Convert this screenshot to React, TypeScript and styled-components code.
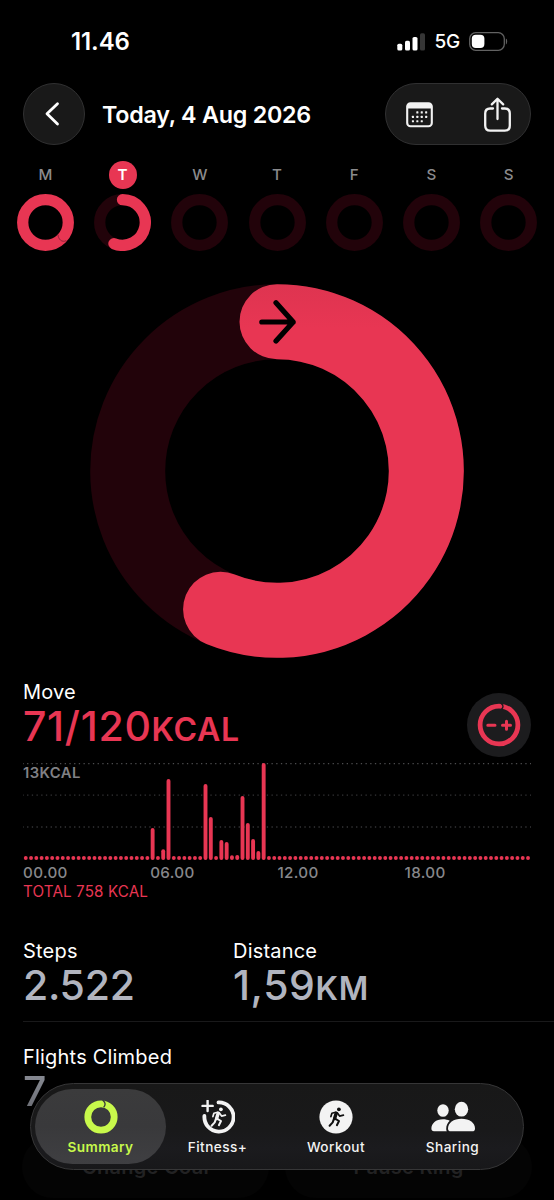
import React from "react";
import styled, { createGlobalStyle } from "styled-components";

const PINK = "#e83653";
const TRACK = "#22030a";
const LIME = "#c8f94b";

const GlobalStyle = createGlobalStyle`
  * { box-sizing: border-box; }
  html, body { margin: 0; background: #000; overflow: hidden; }
  svg { display: block; }
`;

const Screen = styled.main`
  position: relative;
  width: 554px;
  height: 1200px;
  overflow: hidden;
  display: flex;
  flex-direction: column;
  background: #000;
  color: #fff;
  font-family: Inter, "Liberation Sans", sans-serif;
`;

const StatusBar = styled.header`
  height: 83px;
  flex: none;
  display: flex;
  align-items: center;
  padding: 0 46px 0 71px;
`;

const Clock = styled.time`
  font-size: 24px;
  font-weight: 600;
  letter-spacing: -0.1px;
  margin-right: auto;
`;

const Network = styled.span`
  font-size: 19px;
  font-weight: 500;
  letter-spacing: -0.2px;
  margin: 0 9px 0 9px;
`;

const NavBar = styled.nav`
  height: 62px;
  flex: none;
  display: flex;
  align-items: center;
  padding: 0 23px;
`;

const GlassButton = styled.button`
  width: 62px;
  height: 62px;
  padding: 0 2px 0 0;
  border: 1px solid #303031;
  border-radius: 50%;
  background: #191919;
  color: #fff;
  display: flex;
  align-items: center;
  justify-content: center;
`;

const Title = styled.h1`
  margin: 0 auto 0 17px;
  font-size: 23.3px;
  font-weight: 600;
  letter-spacing: -0.25px;
  white-space: nowrap;
`;

const ActionGroup = styled.div`
  width: 146px;
  height: 62px;
  border: 1px solid #303031;
  border-radius: 31px;
  background: #191919;
  display: flex;
  align-items: center;
  justify-content: space-between;
  padding: 1px 18px 0 20px;
`;

const Week = styled.section`
  display: flex;
  padding: 15.5px 6.8px 0;
  flex: none;
`;

const Day = styled.div`
  flex: 1;
  display: flex;
  flex-direction: column;
  align-items: center;
  gap: 5.7px;
`;

const DayLabel = styled.span<{ $today: boolean }>`
  width: 28px;
  height: 28px;
  border-radius: 50%;
  line-height: 28px;
  text-align: center;
  font-size: 15.2px;
  font-weight: ${(p) => (p.$today ? 600 : 500)};
  color: ${(p) => (p.$today ? "#fff" : "#8b8b8d")};
  background: ${(p) => (p.$today ? PINK : "transparent")};
`;

const RingHero = styled.section`
  display: flex;
  justify-content: center;
  margin-top: 32.8px;
  flex: none;
`;

const MoveHeader = styled.section`
  display: flex;
  justify-content: space-between;
  padding: 22px 23px 0;
  height: 105px;
  flex: none;
`;

const Metric = styled.div`
  display: flex;
  flex-direction: column;
`;

const MetricLabel = styled.span`
  font-size: 20px;
  line-height: 24px;
  height: 24px;
  letter-spacing: 0.2px;
  white-space: nowrap;
`;

const MetricValue = styled.span<{ $color: string; $spacing?: number }>`
  font-size: 41px;
  line-height: 44px;
  height: 44px;
  font-weight: 500;
  letter-spacing: ${(p) => p.$spacing ?? 0}px;
  white-space: nowrap;
  color: ${(p) => p.$color};
`;

const Unit = styled.span`
  font-size: 32px;
  font-weight: 600;
`;

const EditGoal = styled.button`
  width: 64px;
  height: 64px;
  margin-top: 13px;
  border: 0;
  padding: 0;
  border-radius: 50%;
  background: #1c1c1e;
  display: flex;
  align-items: center;
  justify-content: center;
`;

const ChartBlock = styled.section`
  padding: 0 23px;
  flex: none;
`;

const Plot = styled.div`
  position: relative;
  height: 97px;
`;

const PeakLabel = styled.span`
  position: absolute;
  left: 0;
  top: 1px;
  font-size: 14.8px;
  line-height: 18px;
  font-weight: 600;
  letter-spacing: 0.45px;
  color: #818185;
`;

const Axis = styled.div`
  display: grid;
  grid-template-columns: repeat(4, 127.2px);
  font-size: 15.2px;
  line-height: 18px;
  font-weight: 500;
  letter-spacing: 0.35px;
  color: #87878b;
  padding-top: 4.2px;
`;

const Total = styled.div`
  font-size: 15.2px;
  line-height: 18px;
  padding-top: 0.9px;
  height: 18px;
  letter-spacing: 0.12px;
  color: ${PINK};
`;

const Stats = styled.section`
  display: grid;
  grid-template-columns: 210px 1fr;
  margin: 38.5px 0 0 23px;
  padding-bottom: 14.5px;
  border-bottom: 1px solid #19191a;
  flex: none;
`;

const Flights = styled.section`
  margin: 22.7px 0 0 23px;
  flex: none;
`;

const FadedValue = styled(MetricValue)`
  display: block;
  color: transparent;
  background: linear-gradient(#8b8e97, #696b72);
  background-clip: text;
  -webkit-background-clip: text;
`;

const GoalActions = styled.div`
  position: absolute;
  left: 22px;
  right: 22px;
  top: 1136px;
  display: grid;
  grid-template-columns: 1fr 1fr;
  gap: 16px;
`;

const GoalButton = styled.button`
  height: 62px;
  border: 0;
  padding: 0 0 1px;
  border-radius: 31px;
  background: #040404;
  color: #222223;
  font: 600 20px/24px Inter, sans-serif;
  letter-spacing: 0.25px;
`;

const TabBar = styled.nav`
  position: absolute;
  left: 30px;
  top: 1083px;
  width: 494px;
  height: 87px;
  border: 1px solid #363637;
  border-radius: 43.5px;
  background: linear-gradient(#181818 0%, #19191a 55%, #1b1b1e 75%, #18181a 100%);
  display: grid;
  grid-template-columns: 131px 103px 134px 99px;
  padding: 5px 4px;
`;

const Tab = styled.button<{ $active?: boolean }>`
  border: 0;
  padding: 11px 0 0;
  border-radius: 38px;
  background: ${(p) => (p.$active ? "linear-gradient(#3b3b3c, #39393b 50%, #3f3f42)" : "none")};
  color: ${(p) => (p.$active ? LIME : "#f3f3f3")};
  font: ${(p) => (p.$active ? 600 : 500)} 13.6px/18px Inter, sans-serif;
  letter-spacing: ${(p) => (p.$active ? 0.4 : 0.45)}px;
  display: flex;
  flex-direction: column;
  align-items: center;
  gap: 4px;
`;

const TabIcon = styled.span`
  position: relative;
  height: 34px;
  display: flex;
  align-items: center;
  justify-content: center;
`;

function arc(c: number, r: number, degrees: number) {
  const a = (degrees * Math.PI) / 180;
  const x = c + r * Math.sin(a);
  const y = c - r * Math.cos(a);
  return `M${c} ${c - r}A${r} ${r} 0 ${degrees > 180 ? 1 : 0} 1 ${x} ${y}`;
}

function DayRing({ state }: { state: string }) {
  return (
    <svg width="57" height="57" viewBox="0 0 57 57" fill="none">
      <circle cx="28.5" cy="28.5" r="22.8" stroke={state === "full" ? PINK : TRACK} strokeWidth="11.3" />
      {state === "partial" && (
        <path d={arc(28.5, 22.8, 202)} stroke={PINK} strokeWidth="11.3" strokeLinecap="round" />
      )}
      {state === "full" && <path d="M41 40.5C41 45 45 49 49.3 46.6" stroke="#95243a" strokeWidth="1" />}
    </svg>
  );
}

/* Sprinting figure drawn inside a 34px tab icon. */
function Runner({ color }: { color: string }) {
  return (
    <g fill="none" stroke={color} strokeLinecap="round" strokeLinejoin="round">
      <circle cx="19.9" cy="9.3" r="1.9" fill={color} stroke="none" />
      <path d="M17.2 13.2L15.6 18.6" strokeWidth="3.4" />
      <path d="M16.6 12.3L12.9 13.3L11.9 16.6" strokeWidth="1.7" />
      <path d="M18.4 13L20.6 16.1L24.4 15.2" strokeWidth="1.7" />
      <path d="M16.4 18.9L20 21L17.9 25.2" strokeWidth="2" />
      <path d="M14.8 19.2L13.7 22.4L10.6 25.7" strokeWidth="2" />
    </g>
  );
}

const days = [
  { name: "M", state: "full" },
  { name: "T", state: "partial", today: true },
  { name: "W", state: "empty" },
  { name: "T", state: "empty" },
  { name: "F", state: "empty" },
  { name: "S", state: "empty" },
  { name: "S", state: "empty" },
];

const activity: Record<number, number> = {
  24: 32, 26: 10.7, 27: 81, 34: 76, 35: 43, 37: 20, 38: 18, 39: 4.7,
  40: 5, 41: 64, 42: 37, 43: 21, 44: 9, 45: 97,
};

function MoveChart() {
  return (
    <svg width="508" height="97" viewBox="0 0 508 97">
      {[0.6, 32.2, 64].map((y, i) => (
        <line key={y} x1="-0.6" x2="508" y1={y} y2={y} stroke={i ? "#353537" : "#4c4c4e"} strokeWidth="1.3" strokeDasharray="1.3 3.4" />
      ))}
      {Array.from({ length: 96 }, (_, i) => {
        const h = activity[i] ?? 4;
        return <rect key={i} x={0.8 + i * 5.287} y={97 - h} width="3.9" height={h} rx="1.95" fill={PINK} />;
      })}
    </svg>
  );
}

export default function App() {
  return (
    <Screen>
      <GlobalStyle />
      <StatusBar>
        <Clock>11.46</Clock>
        <svg width="28" height="18" viewBox="0 0 28 18" fill="#fff">
          <rect x="0.3" y="10.7" width="5" height="6.8" rx="1.6" />
          <rect x="8" y="7.8" width="5" height="9.7" rx="1.6" />
          <rect x="15.5" y="4" width="5" height="13.5" rx="1.6" />
          <rect x="23" y="0.3" width="5" height="17.2" rx="1.6" fill="#363636" />
        </svg>
        <Network>5G</Network>
        <svg width="39" height="19" viewBox="0 0 39 19" fill="none">
          <rect x="0.7" y="0.7" width="34.6" height="17.6" rx="6" stroke="#626262" strokeWidth="1.3" />
          <rect x="2.8" y="2.8" width="12.6" height="13.2" rx="4" fill="#fff" />
          <path d="M36.9 6.5C38.6 7.2 38.6 11.6 36.9 12.4Z" fill="#626262" />
        </svg>
      </StatusBar>

      <NavBar>
        <GlassButton aria-label="Back">
          <svg width="16" height="26" viewBox="0 0 16 26" fill="none" stroke="#fff" strokeWidth="2.8" strokeLinecap="round" strokeLinejoin="round">
            <path d="M12.5 2.7L2 12.8L12.5 23" />
          </svg>
        </GlassButton>
        <Title>Today, 4 Aug 2026</Title>
        <ActionGroup>
          <svg width="27" height="26" viewBox="0 0 27 26" fill="none">
            <rect x="1.2" y="1.3" width="24.6" height="23" rx="3.3" stroke="#f2f2f2" strokeWidth="2.1" />
            <path d="M1.2 4.2Q1.2 1.3 4.4 1.3H22.6Q25.8 1.3 25.8 4.2V6.6H1.2Z" fill="#f2f2f2" />
            {[[11.2, 10.2], [15.6, 10.2], [20, 10.2], [6.8, 14.7], [11.2, 14.7], [15.6, 14.7], [20, 14.7], [6.8, 19.1], [11.2, 19.1], [15.6, 19.1]].map(([x, y]) => (
              <rect key={`${x}-${y}`} x={x - 0.9} y={y - 0.9} width="2.1" height="2.1" rx="0.5" fill="#f2f2f2" />
            ))}
          </svg>
          <svg width="29" height="36" viewBox="0 0 29 36" fill="none" stroke="#f2f2f2" strokeWidth="2.3" strokeLinecap="round" strokeLinejoin="round">
            <path d="M10 11.5H7.2Q2.2 11.5 2.2 16.5V28.5Q2.2 33.7 7.2 33.7H21.8Q26.8 33.7 26.8 28.5V16.5Q26.8 11.5 21.8 11.5H19" />
            <path d="M14.5 22V2M8.8 7.4L14.5 1.8L20.2 7.4" />
          </svg>
        </ActionGroup>
      </NavBar>

      <Week>
        {days.map((d, i) => (
          <Day key={i}>
            <DayLabel $today={!!d.today}>{d.name}</DayLabel>
            <DayRing state={d.state} />
          </Day>
        ))}
      </Week>

      <RingHero>
        <svg width="374" height="374" viewBox="0 0 374 374" fill="none">
          <defs>
            <linearGradient id="ringFill" gradientUnits="userSpaceOnUse" x1="0" y1="0" x2="0" y2="45">
              <stop offset="0" stopColor="#de3450" />
              <stop offset="1" stopColor={PINK} />
            </linearGradient>
          </defs>
          <circle cx="187" cy="187" r="149.3" stroke={TRACK} strokeWidth="75" />
          <path d={arc(187, 149.3, 202.2)} stroke="url(#ringFill)" strokeWidth="75" strokeLinecap="round" />
          <path d="M171.8 38H203.2M186 18.8L203.2 38L186 57" stroke="#000" strokeWidth="5.2" strokeLinecap="round" strokeLinejoin="round" />
        </svg>
      </RingHero>

      <MoveHeader>
        <Metric>
          <MetricLabel>Move</MetricLabel>
          <MetricValue $color={PINK} $spacing={0.7}>
            71/120<Unit>KCAL</Unit>
          </MetricValue>
        </Metric>
        <EditGoal aria-label="Adjust move goal">
          <svg width="44" height="44" viewBox="0 0 44 44" fill="none" stroke={PINK}>
            <circle cx="22" cy="22" r="18.9" strokeWidth="4.8" />
            <path d="M24.2 0.5Q27.6 3.3 24.5 6.2" stroke="#1c1c1e" strokeWidth="1.4" />
            <path d="M10.8 22.2H18M25.5 22.2H33.5M29.5 18.2V26.2" strokeWidth="3" strokeLinecap="round" />
          </svg>
        </EditGoal>
      </MoveHeader>

      <ChartBlock>
        <Plot>
          <MoveChart />
          <PeakLabel>13KCAL</PeakLabel>
        </Plot>
        <Axis>
          <span>00.00</span>
          <span>06.00</span>
          <span>12.00</span>
          <span>18.00</span>
        </Axis>
        <Total>TOTAL 758 KCAL</Total>
      </ChartBlock>

      <Stats>
        <Metric>
          <MetricLabel>Steps</MetricLabel>
          <MetricValue $color="#b1b4bf" $spacing={-0.3}>2.522</MetricValue>
        </Metric>
        <Metric>
          <MetricLabel>Distance</MetricLabel>
          <MetricValue $color="#b1b4bf" $spacing={0.6}>
            1,59<Unit>KM</Unit>
          </MetricValue>
        </Metric>
      </Stats>

      <Flights>
        <Metric>
          <MetricLabel>Flights Climbed</MetricLabel>
          <FadedValue $color="transparent">7</FadedValue>
        </Metric>
      </Flights>

      <GoalActions>
        <GoalButton>Change Goal</GoalButton>
        <GoalButton>Pause Ring</GoalButton>
      </GoalActions>

      <TabBar>
        <Tab $active>
          <TabIcon>
            <svg width="34" height="34" viewBox="0 0 34 34" fill="none">
              <circle cx="17" cy="17" r="13.2" stroke={LIME} strokeWidth="6.8" />
              <path d="M18.6 0Q23 3.6 19.6 7.4" stroke="#39393a" strokeWidth="1.3" />
            </svg>
          </TabIcon>
          Summary
        </Tab>
        <Tab>
          <TabIcon>
            <svg width="34" height="34" viewBox="0 0 34 34" fill="none" stroke="#f3f3f3" strokeLinecap="round">
              <path d="M17.5 2.4A14.6 14.6 0 1 1 3.4 16" strokeWidth="3.8" />
              <path d="M6.6 0.8V11M1.5 5.9H11.7" strokeWidth="2.4" />
              <Runner color="#f3f3f3" />
            </svg>
          </TabIcon>
          Fitness+
        </Tab>
        <Tab>
          <TabIcon>
            <svg width="34" height="34" viewBox="0 0 34 34">
              <circle cx="17" cy="17" r="16.6" fill="#f3f3f3" />
              <Runner color="#111" />
            </svg>
          </TabIcon>
          Workout
        </Tab>
        <Tab>
          <TabIcon>
            <svg width="44" height="34" viewBox="0 0 44 34" fill="#f3f3f3">
              <ellipse cx="12" cy="10.5" rx="5.7" ry="6.3" />
              <path d="M0.4 28.6C0.4 23.4 4.8 19.2 12 19.2C14.6 19.2 16.8 19.7 18.7 20.7C16.4 22.8 15.2 25.6 15.2 28.9Q15.2 30.4 15.8 31.3H3Q0.4 31.3 0.4 28.6Z" />
              <ellipse cx="30.5" cy="9.2" rx="6.7" ry="7.4" />
              <path d="M17 28.4C17 23 22.4 18.8 30.5 18.8S44 23 44 28.4Q44 31.3 41 31.3H20Q17 31.3 17 28.4Z" />
            </svg>
          </TabIcon>
          Sharing
        </Tab>
      </TabBar>
    </Screen>
  );
}
